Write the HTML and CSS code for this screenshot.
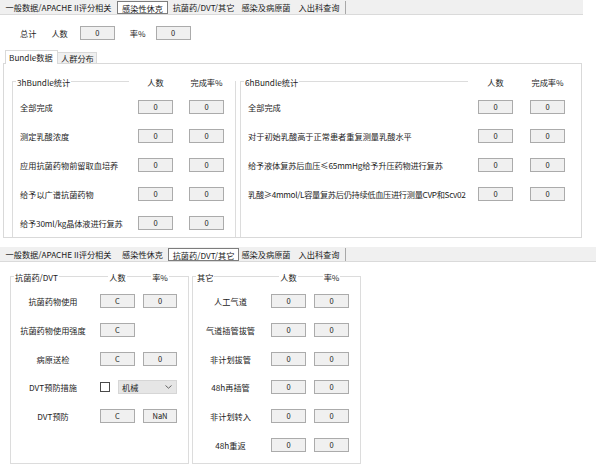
FILE: index.html
```html
<!DOCTYPE html>
<html lang="zh-CN">
<head>
<meta charset="utf-8">
<title>统计</title>
<link rel="stylesheet" href="styles.css">
</head>
<body>
<div class="page">
  <div class="tabstrip strip-top">
    <div class="tab t1">一般数据/APACHE II评分相关</div>
    <div class="tab t2 active">感染性休克</div>
    <div class="tab t3">抗菌药/DVT/其它</div>
    <div class="tab t4">感染及病原菌</div>
    <div class="tab t5 last">入出科查询</div>
  </div>

  <div class="summary">
    <span class="sum-label sl1">总计</span>
    <span class="sum-label sl2">人数</span>
    <span class="box sb1">0</span>
    <span class="sum-label sl3">率%</span>
    <span class="box sb2">0</span>
  </div>

  <div class="subtabs">
    <div class="subtab active">Bundle数据</div>
    <div class="subtab">人群分布</div>
  </div>

  <div class="panel">
    <div class="group g3h">
      <div class="ghead">
        <span class="gtitle">3hBundle统计</span>
        <span class="gspace"></span>
        <span class="gcols">
          <span class="gc">人数</span>
          <span class="gc">完成率%</span>
        </span>
      </div>
      <div class="brow"><span class="blabel">全部完成</span><span class="box">0</span><span class="box">0</span></div>
      <div class="brow"><span class="blabel">测定乳酸浓度</span><span class="box">0</span><span class="box">0</span></div>
      <div class="brow"><span class="blabel">应用抗菌药物前留取血培养</span><span class="box">0</span><span class="box">0</span></div>
      <div class="brow"><span class="blabel">给予以广谱抗菌药物</span><span class="box">0</span><span class="box">0</span></div>
      <div class="brow"><span class="blabel tight">给予30ml/kg晶体液进行复苏</span><span class="box">0</span><span class="box">0</span></div>
    </div>
    <div class="group g6h">
      <div class="ghead">
        <span class="gtitle">6hBundle统计</span>
        <span class="gspace"></span>
        <span class="gcols">
          <span class="gc">人数</span>
          <span class="gc">完成率%</span>
        </span>
      </div>
      <div class="brow"><span class="blabel">全部完成</span><span class="box">0</span><span class="box">0</span></div>
      <div class="brow"><span class="blabel">对于初始乳酸高于正常患者重复测量乳酸水平</span><span class="box">0</span><span class="box">0</span></div>
      <div class="brow"><span class="blabel tight">给予液体复苏后血压≤65mmHg给予升压药物进行复苏</span><span class="box">0</span><span class="box">0</span></div>
      <div class="brow"><span class="blabel tighter">乳酸≥4mmol/L容量复苏后仍持续低血压进行测量CVP和Scv02</span><span class="box">0</span><span class="box">0</span></div>
    </div>
  </div>

  <div class="tabstrip strip-bottom">
    <div class="tab t1">一般数据/APACHE II评分相关</div>
    <div class="tab t2">感染性休克</div>
    <div class="tab t3 active">抗菌药/DVT/其它</div>
    <div class="tab t4">感染及病原菌</div>
    <div class="tab t5 last">入出科查询</div>
  </div>

  <div class="lower">
    <div class="group lg1">
      <div class="ghead">
        <span class="gtitle">抗菌药/DVT</span>
        <span class="gspace"></span>
        <span class="gc lc1"><span class="gct">人数</span></span>
        <span class="gc lc2"><span class="gct">率%</span></span>
      </div>
      <div class="lrow"><span class="llabel">抗菌药物使用</span><span class="box b1">C</span><span class="box b2">0</span></div>
      <div class="lrow"><span class="llabel">抗菌药物使用强度</span><span class="box b1">C</span></div>
      <div class="lrow"><span class="llabel">病原送检</span><span class="box b1">C</span><span class="box b2">0</span></div>
      <div class="lrow"><span class="llabel">DVT预防措施</span><span class="check"></span><span class="select"><span class="seltext">机械</span><svg class="chev" width="7" height="4" viewBox="0 0 7 4"><polyline points="0.5,0.5 3.5,3.2 6.5,0.5" fill="none" stroke="#555" stroke-width="0.9"/></svg></span></div>
      <div class="lrow"><span class="llabel">DVT预防</span><span class="box b1">C</span><span class="box b2">NaN</span></div>
    </div>
    <div class="group lg2">
      <div class="ghead">
        <span class="gtitle">其它</span>
        <span class="gspace"></span>
        <span class="gc lc1"><span class="gct">人数</span></span>
        <span class="gc lc2"><span class="gct">率%</span></span>
      </div>
      <div class="lrow"><span class="llabel">人工气道</span><span class="box b1">0</span><span class="box b2">0</span></div>
      <div class="lrow"><span class="llabel">气道插管拔管</span><span class="box b1">0</span><span class="box b2">0</span></div>
      <div class="lrow"><span class="llabel">非计划拔管</span><span class="box b1">0</span><span class="box b2">0</span></div>
      <div class="lrow"><span class="llabel">48h再插管</span><span class="box b1">0</span><span class="box b2">0</span></div>
      <div class="lrow"><span class="llabel">非计划转入</span><span class="box b1">0</span><span class="box b2">0</span></div>
      <div class="lrow"><span class="llabel">48h重返</span><span class="box b1">0</span><span class="box b2">0</span></div>
    </div>
  </div>
</div>
</body>
</html>
```

FILE: styles.css
```css
* { box-sizing: border-box; }
html, body { margin: 0; padding: 0; background: #fff; }
body {
  font-family: "Noto Sans CJK SC", "Noto Sans", sans-serif;
  font-size: 8.2px;
  color: #1c1c1c;
  width: 600px;
  height: 475px;
  overflow: hidden;
}
.page { width: 600px; }

/* tab strips */
.tabstrip {
  display: flex;
  height: 15px;
  background: #f0f0f0;
  border-bottom: 1px solid #dadada;
  padding-top: 1px;
}
.strip-top { width: 583px; }
.strip-bottom { width: 596px; margin-top: 9px; }
.tab {
  height: 13px;
  line-height: 12px;
  text-align: center;
  white-space: nowrap;
  overflow: hidden;
}
.tab.t1 { width: 117px; }
.tab.t2 { width: 51px; }
.tab.t3 { width: 71px; }
.tab.t4 { width: 54px; }
.tab.t5 { width: 53px; }
.tab.active { background: #fff; border: 1px solid #7d7d7d; }
.tab.last { border-right: 1px solid #a8a8a8; }

/* summary */
.summary {
  display: flex;
  align-items: center;
  height: 14px;
  margin-top: 11px;
}
.sum-label { line-height: 12px; white-space: nowrap; }
.sl1 { margin-left: 20px; }
.sl2 { margin-left: 15px; }
.sb1 { margin-left: 12px; width: 31px; }
.sl3 { margin-left: 15px; }
.sb2 { margin-left: 10px; width: 35px; }

/* boxes */
.box {
  display: inline-block;
  height: 14px;
  width: 35px;
  flex: none;
  background: #f0f0f0;
  border: 1px solid #ababab;
  line-height: 11px;
  text-align: center;
  font-size: 7.5px;
  color: #222;
  white-space: nowrap;
}

/* sub tabs */
.subtabs {
  display: flex;
  align-items: flex-end;
  height: 13px;
  margin-top: 10px;
  padding-left: 5px;
}
.subtab {
  height: 11px;
  line-height: 10px;
  padding: 0 3px;
  background: #f0f0f0;
  border: 1px solid #d9d9d9;
  border-bottom: none;
  white-space: nowrap;
}
.subtab.active {
  position: relative;
  z-index: 1;
  height: 14px;
  margin-bottom: -1px;
  background: #fff;
  width: 53px;
  line-height: 12px;
}
.subtab:not(.active) { width: 39px; border-left: none; }

/* bundle panel */
.panel {
  display: flex;
  margin-left: 3px;
  width: 579px;
  height: 175px;
  border: 1px solid #d9d9d9;
  padding: 17px 0 0 8px;
  overflow: hidden;
}
.group {
  border: 1px solid #dcdcdc;
  display: flex;
  flex-direction: column;
}
.g3h { width: 224px; height: 200px; padding-right: 11px; }
.g6h { flex: 1; margin-left: 4px; height: 200px; border-right: none; padding-right: 16px; }

.ghead {
  display: flex;
  height: 12px;
  line-height: 12px;
  margin-top: -6px;
  margin-bottom: 4px;
  white-space: nowrap;
}
.gtitle { background: #fff; padding: 0 1px; margin-left: 3px; }
.gspace { flex: 1; }
.gcols { display: flex; background: #fff; }
.g3h .gcols { padding-left: 9px; margin-right: -11px; padding-right: 11px; gap: 16px; }
.g6h .gcols { padding-left: 10px; margin-right: -16px; padding-right: 16px; gap: 17px; }
.gcols .gc { width: 35px; text-align: center; }

.brow {
  display: flex;
  align-items: center;
  height: 29px;
  flex: none;
}
.blabel { flex: 1; padding-left: 7px; white-space: nowrap; }
.blabel.tight { letter-spacing: -0.15px; }
.blabel.tighter { letter-spacing: -0.3px; }
.g3h .brow .box + .box { margin-left: 16px; }
.g6h .brow .box + .box { margin-left: 17px; }

/* lower groups */
.lower {
  display: flex;
  margin-top: 14px;
  margin-left: 10px;
}
.lg1 { width: 179px; height: 188px; padding-right: 11px; }
.lg2 { width: 169px; height: 188px; margin-left: 3px; padding-right: 11px; }
.lower .gtitle { margin-left: 3px; }
.gc.lc1 { width: 35px; text-align: center; }
.gc.lc2 { width: 34px; margin-left: 8px; text-align: center; }
.lg2 .gc.lc2 { width: 35px; }
.gct { background: #fff; padding: 0 1px; }

.lrow {
  display: flex;
  align-items: center;
  height: 28.7px;
  flex: none;
}
.llabel { text-align: center; white-space: nowrap; }
.lg1 .llabel { width: 84px; margin-right: 5px; }
.lg2 .llabel { width: 75px; margin-right: 3px; }
.lrow .b2 { margin-left: 8px; width: 34px; }
.lg2 .lrow .b2 { width: 35px; }

.check {
  width: 10px;
  height: 10px;
  border: 1px solid #4a4a4a;
  background: #fff;
  flex: none;
}
.select {
  display: flex;
  align-items: center;
  justify-content: space-between;
  margin-left: 8px;
  width: 59px;
  height: 14px;
  background: #e6e6e6;
  border: 1px solid #d6d6d6;
  padding: 0 4px 0 3px;
  line-height: 12px;
}
.chev { flex: none; }
```
